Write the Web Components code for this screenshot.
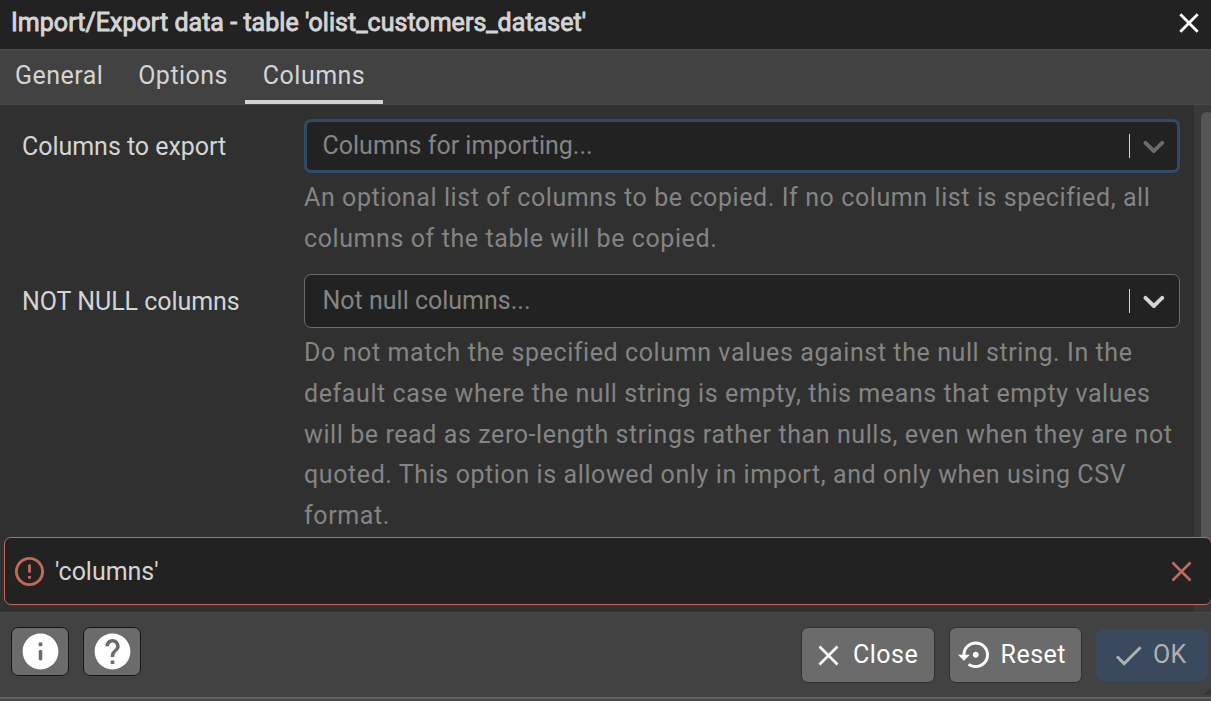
<!DOCTYPE html>
<html lang="en">
<head>
<meta charset="utf-8">
<title>Import/Export data</title>
<style>
html,body{margin:0;height:100%;overflow:hidden;background:#303030}
body{font:25px/40.75px Roboto,"Liberation Sans",sans-serif;color:#d4d4d4}
</style>
</head>
<body>
<import-dialog></import-dialog>
<script>
const ICONS = {
  close: '<path d="M4 4L20 20M20 4L4 20" fill="none" stroke="currentColor"/>',
  chevron: '<path transform="scale(1.2)" fill="currentColor" d="M4.516 7.548c0.436-0.446 1.043-0.481 1.576 0l3.908 3.747 3.908-3.747c0.533-0.481 1.141-0.446 1.574 0 0.436 0.445 0.408 1.197 0 1.615-0.406 0.418-4.695 4.502-4.695 4.502-0.217 0.223-0.502 0.335-0.787 0.335s-0.57-0.112-0.789-0.335c0 0-4.287-4.084-4.695-4.502s-0.436-1.17 0-1.615z"/>',
  error: '<path fill="currentColor" d="M12 7c.55 0 1 .45 1 1v4c0 .55-.45 1-1 1s-1-.45-1-1V8c0-.55.45-1 1-1zm-.01-5C6.47 2 2 6.48 2 12s4.47 10 9.99 10C17.52 22 22 17.52 22 12S17.52 2 11.99 2zM12 20c-4.42 0-8-3.58-8-8s3.58-8 8-8 8 3.58 8 8-3.58 8-8 8zm1-3h-2v-2h2v2z"/>',
  info: '<path fill="currentColor" d="M12 2C6.48 2 2 6.48 2 12s4.48 10 10 10 10-4.48 10-10S17.52 2 12 2zm0 15c-.55 0-1-.45-1-1v-4c0-.55.45-1 1-1s1 .45 1 1v4c0 .55-.45 1-1 1zm1-8h-2V7h2v2z"/>',
  help: '<path fill="currentColor" d="M12 2C6.48 2 2 6.48 2 12s4.48 10 10 10 10-4.48 10-10S17.52 2 12 2zm1 17h-2v-2h2v2zm2.07-7.75l-.9.92C13.45 12.9 13 13.5 13 15h-2v-.5c0-1.1.45-2.1 1.17-2.83l1.24-1.26c.37-.36.59-.86.59-1.41 0-1.1-.9-2-2-2s-2 .9-2 2H8c0-2.21 1.79-4 4-4s4 1.79 4 4c0 .88-.36 1.68-.93 2.25z"/>',
  reset: '<path fill="currentColor" d="M14 12c0-1.1-.9-2-2-2s-2 .9-2 2 .9 2 2 2 2-.9 2-2zm-2-9c-4.97 0-9 4.03-9 9H0l4 4 4-4H5c0-3.87 3.13-7 7-7s7 3.13 7 7-3.13 7-7 7c-1.51 0-2.91-.49-4.06-1.3l-1.42 1.44C8.04 20.3 9.94 21 12 21c4.97 0 9-4.03 9-9s-4.03-9-9-9z"/>',
  check: '<path fill="currentColor" d="M9 16.17L4.83 12l-1.42 1.41L9 19 21 7l-1.41-1.41z"/>'
};
function define(name, css, html) {
  customElements.define(name, class extends HTMLElement {
    constructor() {
      super();
      this.attachShadow({mode: 'open'}).innerHTML = `<style>*{box-sizing:border-box}:host{display:block;box-sizing:border-box}${css}</style>` +
        (typeof html === 'function' ? html(this) : html);
    }
  });
}
define('ui-icon', ':host{display:block;flex:none;width:var(--size,24px);height:var(--size,24px)}svg{display:block;width:100%;height:100%;overflow:visible}path[stroke]{stroke-width:var(--sw,2.6)}',
  el => `<svg viewBox="0 0 24 24">${ICONS[el.getAttribute('name')]}</svg>`);

define('dialog-title', `:host{display:flex;height:49px;padding:0 12px 0 11px;background:#222;justify-content:space-between}
  .t{-webkit-text-stroke:.9px currentColor;line-height:45px;letter-spacing:.03px;white-space:nowrap}
  ui-icon{--size:26px;color:#fff;margin-top:10px;margin-right:-3px}`,
  '<span class="t"><slot></slot></span><ui-icon name="close"></ui-icon>');

define('tab-bar', ':host{display:flex;height:56px;background:#424242;border-top:1px solid #4a4a4a;border-bottom:1px solid #4a4a4a}', '<slot></slot>');
define('tab-item', `:host{height:54px;padding:0 17.5px 0 17.4px;line-height:51px;letter-spacing:.47px;white-space:nowrap}
  :host([active]){border-bottom:4px solid #d4d4d4}`, '<slot></slot>');

define('multi-select', `:host{display:flex;align-items:center;height:54px;width:876px;border:1px solid #6b6b6b;border-radius:7px;background:#222;padding:0 7px 0 17.5px;color:#848484}
  :host([focused]){border:3px solid #314a69;padding:0 5px 0 15.5px}
  .t{flex:1;line-height:52px}.s{width:1px;height:24px;background:#d4d4d4;margin-right:6.3px}
  ui-icon{--size:35.7px;color:#d4d4d4;margin-bottom:1px}:host([focused]) ui-icon{color:#6b6b6b}`,
  '<span class="t"><slot></slot></span><span class="s"></span><ui-icon name="chevron"></ui-icon>');

define('form-row', `:host{display:grid;grid-template-columns:282px 876px;padding-left:22px}
  label{line-height:56px;height:54px;letter-spacing:-.04px}.h{grid-column:2;padding-top:5.1px;color:#848484;white-space:nowrap}`,
  '<label><slot name="label"></slot></label><slot name="control"></slot><div class="h"><slot></slot></div>');
define('help-line', ':host{letter-spacing:.59px;height:40.75px}', '<slot></slot>');

define('error-bar', `:host{display:flex;align-items:center;height:68px;border:1px solid #c4695a;border-radius:7px;background:#222;padding:0 16px 0 7px;letter-spacing:-.04px}
  .t{flex:1;padding:2px 0 0 8px}ui-icon{color:#c4695a;--size:35px}ui-icon.x{--size:27px;--sw:2.3}`,
  '<ui-icon name="error"></ui-icon><span class="t"><slot></slot></span><ui-icon class="x" name="close"></ui-icon>');

define('ui-button', `:host{display:flex;align-items:center;height:56px;border:1px solid #303030;border-radius:7px;background:#6b6b6b;color:#fff;letter-spacing:.5px;white-space:nowrap}
  ui-icon{margin-right:var(--gap,10px)}:host([icon-only]){width:58px;height:49px;border-color:#151515;justify-content:center}:host([icon-only]) ui-icon{--size:43px;margin:0}
  :host([disabled]){background:#3a495d;border-color:#3a495d;color:#b0b0b0;height:52px;letter-spacing:.3px}`,
  el => `<ui-icon name="${el.getAttribute('icon')}"></ui-icon><slot></slot>`);

define('dialog-footer', `:host{display:flex;justify-content:space-between;height:85px;background:#424242;border-top:1px solid #4a4a4a;padding:0 3px 0 11px}
  .l{display:flex;gap:14px;padding-top:14px}.r{display:flex;gap:14px;height:56px;margin-top:14px;align-items:center}`,
  '<div class="l"><slot name="left"></slot></div><div class="r"><slot></slot></div>');

define('import-dialog', `:host{display:flex;flex-direction:column;width:1211px;height:701px;position:relative}
  .body{height:507px;display:flex;background:#303030}
  .form{width:1194px;padding-top:14px;display:flex;flex-direction:column;gap:14.4px}
  .bar{width:17px;background:#393939;padding:7px 0 0 7px;overflow:hidden}.thumb{height:470px;width:13px;background:#555;border-radius:6px}
  error-bar{position:absolute;left:4px;top:537px;width:1208px}
  .edge{height:4px;background:linear-gradient(#646464 0 1px,#505050 2px,#404040)}
  .grip{position:absolute;right:0;bottom:6px;width:7px;height:8px;background:linear-gradient(135deg,transparent 50%,#353535 50%)}
  .close{width:134px;padding-left:13px;--size:27px;--sw:2.3;--gap:11px}.reset{width:133px;padding-left:7.7px;--size:35.5px;--gap:7.3px}
  .ok{width:112px;padding-left:14px;--size:35px;--gap:7px}`,
`<dialog-title>Import/Export data - table 'olist_customers_dataset'</dialog-title>
<tab-bar><tab-item style="padding-left:15px">General</tab-item><tab-item>Options</tab-item><tab-item active>Columns</tab-item></tab-bar>
<div class="body"><div class="form">
<form-row><span slot="label">Columns to export</span><multi-select slot="control" focused>Columns for importing...</multi-select>
<help-line>An optional list of columns to be copied. If no column list is specified, all</help-line><help-line>columns of the table will be copied.</help-line></form-row>
<form-row><span slot="label">NOT NULL columns</span><multi-select slot="control">Not null columns...</multi-select>
<help-line>Do not match the specified column values against the null string. In the</help-line><help-line>default case where the null string is empty, this means that empty values</help-line><help-line>will be read as zero-length strings rather than nulls, even when they are not</help-line><help-line>quoted. This option is allowed only in import, and only when using CSV</help-line><help-line>format.</help-line></form-row>
</div><div class="bar"><div class="thumb"></div></div></div>
<error-bar>'columns'</error-bar>
<dialog-footer><ui-button slot="left" icon="info" icon-only></ui-button><ui-button slot="left" icon="help" icon-only></ui-button>
<ui-button class="close" icon="close">Close</ui-button><ui-button class="reset" icon="reset">Reset</ui-button><ui-button class="ok" icon="check" disabled>OK</ui-button></dialog-footer>
<div class="edge"></div><div class="grip"></div>`);
</script>
</body>
</html>
